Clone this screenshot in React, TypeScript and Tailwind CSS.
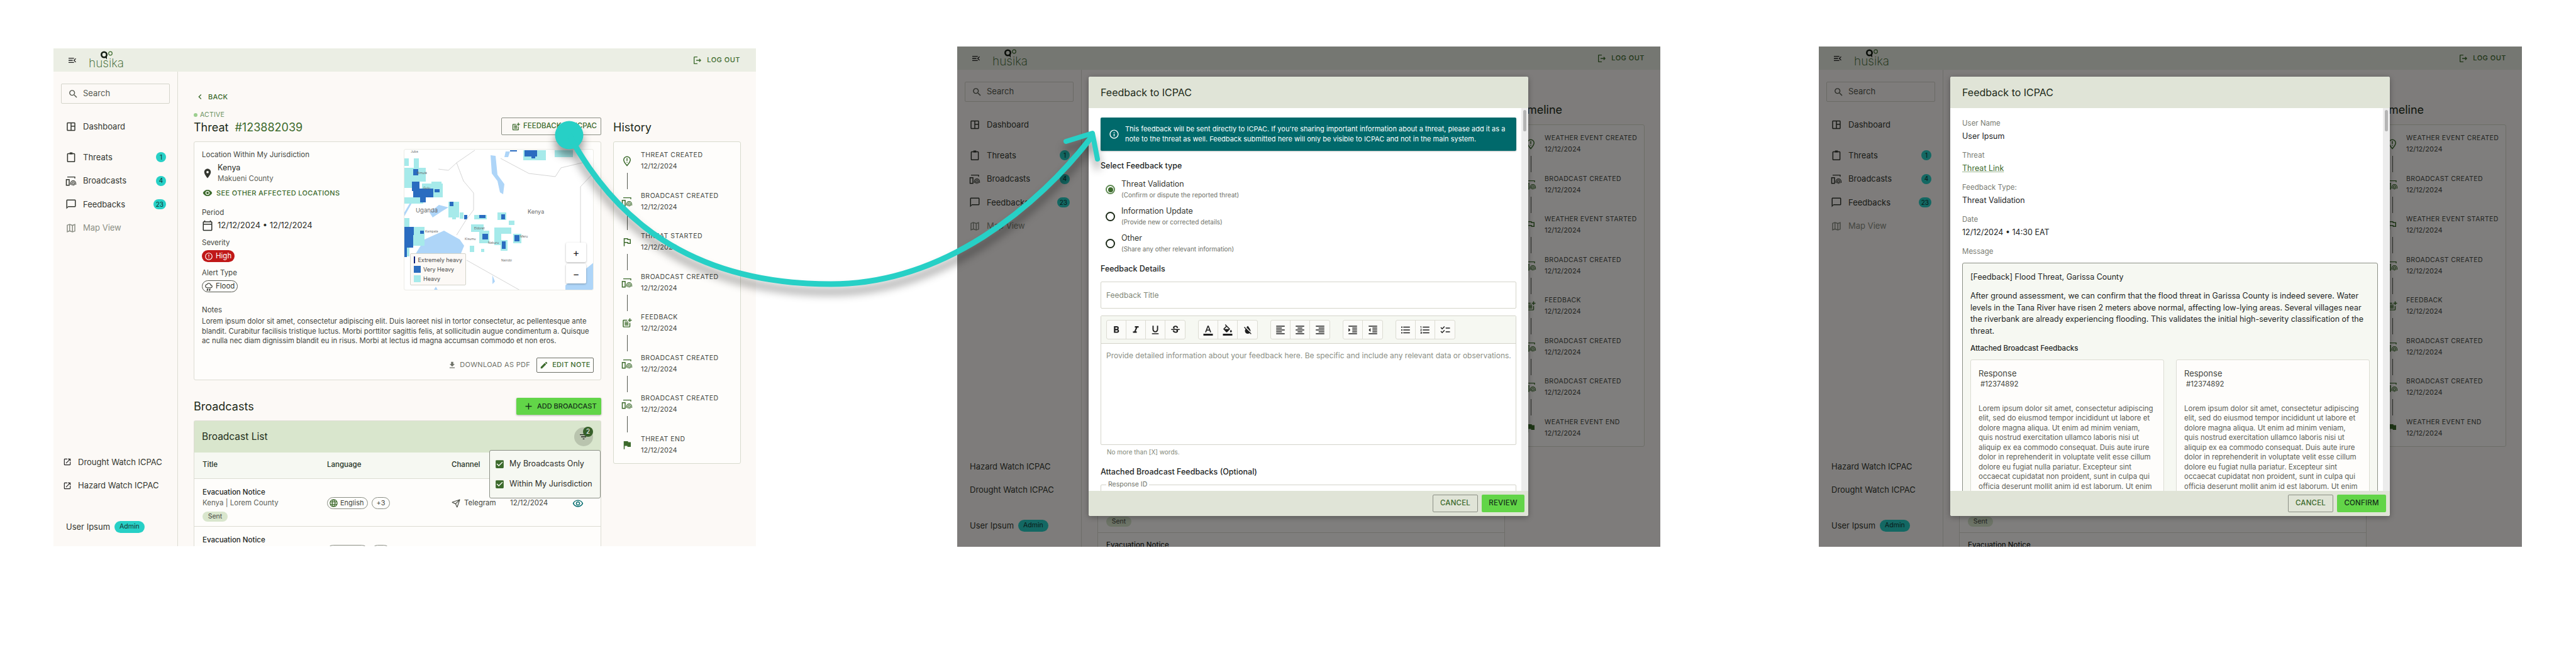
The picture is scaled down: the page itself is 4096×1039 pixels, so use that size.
import type { ReactNode } from "react";
import { Send } from "lucide-react";
import {
  MdAdd, MdCheckBox, MdChecklist, MdChevronLeft, MdChatBubbleOutline, MdEdit, MdErrorOutline, MdFileDownload,
  MdFilterList, MdFlag, MdFormatAlignCenter, MdFormatAlignLeft, MdFormatAlignRight, MdFormatBold, MdFormatColorFill,
  MdFormatColorReset, MdFormatColorText, MdFormatIndentDecrease, MdFormatIndentIncrease, MdFormatItalic,
  MdFormatListBulleted, MdFormatListNumbered, MdFormatUnderlined, MdInfoOutline, MdLanguage, MdLocationOn, MdMenuOpen,
  MdOutlineCalendarToday, MdOutlineFlag, MdOutlineLogout, MdOutlineMap, MdOutlineOpenInNew, MdOutlinePostAdd,
  MdOutlineRemoveRedEye, MdOutlineSpaceDashboard, MdOutlineThunderstorm, MdSearch, MdStrikethroughS, MdVisibility,
} from "react-icons/md";

const lorem =
  "Lorem ipsum dolor sit amet, consectetur adipiscing elit, sed do eiusmod tempor incididunt ut labore et dolore magna aliqua. Ut enim ad minim veniam, quis nostrud exercitation ullamco laboris nisi ut aliquip ex ea commodo consequat. Duis aute irure dolor in reprehenderit in voluptate velit esse cillum dolore eu fugiat nulla pariatur. Excepteur sint occaecat cupidatat non proident, sunt in culpa qui officia deserunt mollit anim id est laborum.  Ut enim ad minim veniam, quis nostrud exercitation";

function ClipboardIcon({ size = 18 }: { size?: number }) {
  return (
    <svg width={size} height={size} viewBox="0 0 24 24" fill="none" stroke="currentColor" strokeWidth="2">
      <rect x="4.5" y="4.5" width="15" height="17" rx="1" />
      <rect x="9" y="2" width="6" height="4" fill="currentColor" stroke="none" />
    </svg>
  );
}

function BroadcastIcon({ size = 18 }: { size?: number }) {
  return (
    <svg width={size} height={size} viewBox="0 0 24 24" fill="none" stroke="currentColor" strokeWidth="1.6">
      <path d="M4 3.5h16v3" strokeWidth="1.8" />
      <rect x="2" y="9" width="6" height="12" strokeWidth="2" />
      <path d="M11 20v-3a5.5 5.5 0 0 1 11 0v3" />
      <path d="M13.8 21v-4a2.7 2.7 0 0 1 5.4 0v4" />
      <path d="M16.5 22v-5" />
    </svg>
  );
}

function PinAlertIcon({ size = 18 }: { size?: number }) {
  return (
    <svg width={size} height={size} viewBox="0 0 24 24" fill="none" stroke="currentColor" strokeWidth="2">
      <path d="M12 22c-3.5-4-7-8-7-12a7 7 0 0 1 14 0c0 4-3.500 8-7 12z" />
      <path d="M12 6v6M12 14v1.500" />
    </svg>
  );
}

function LogoMark() {
  return (
    <div className="flex flex-col items-center w-[51px] h-[32px] relative">
      <svg width="32" height="18" viewBox="0 0 32 18" className="absolute top-0 left-[17px]">
        <circle cx="7.500" cy="7" r="4.200" fill="none" stroke="#141c12" strokeWidth="2.600" />
        <path d="M9 11l3 3.500v-6z" fill="#141c12" />
        <circle cx="17.500" cy="5" r="2.800" fill="none" stroke="#3c6a2c" strokeWidth="1.200" />
      </svg>
      <span className="absolute bottom-[1px] left-0 text-[19px] leading-[20px] font-extralight text-[#2f5c22]">husika</span>
    </div>
  );
}

function TopBar() {
  return (
    <div className="h-[37px] shrink-0 flex items-center justify-between bg-[#ebeee4] pl-[22px] pr-[25px]">
      <div className="flex items-center gap-[18px] text-[#222]">
        <MdMenuOpen size={16} />
        <LogoMark />
      </div>
      <div className="flex items-center gap-[7px] text-[#3c6a2c]">
        <MdOutlineLogout size={16} />
        <span className="text-[11px] font-medium tracking-[0.5px]">LOG OUT</span>
      </div>
    </div>
  );
}

function NavItem({ icon, label, badge, muted }: { icon: ReactNode; label: string; badge?: string; muted?: boolean }) {
  return (
    <div className={`h-[37.5px] flex items-center pl-[19px] pr-[18px] ${muted ? "text-[#8b8f85]" : "text-[#33362f]"}`}>
      <span className="w-[18px] flex justify-center">{icon}</span>
      <span className="ml-[10px] text-[13px] flex-1">{label}</span>
      {badge && (
        <span className="min-w-[16px] h-[16px] px-[4px] rounded-full bg-[#27d0c6] text-[#12312f] text-[10px] flex items-center justify-center">
          {badge}
        </span>
      )}
    </div>
  );
}

function Sidebar({ externalFirst, icons }: { externalFirst: string; icons: boolean }) {
  const second = externalFirst === "Drought" ? "Hazard" : "Drought";
  return (
    <aside className="w-[198px] shrink-0 border-r border-[#dcdcd3] flex flex-col">
      <div className="mt-[19px] mx-[12px] h-[32px] border border-[#d4d4ca] rounded-[2px] flex items-center pl-[10px] gap-[7px] text-[#55584f]">
        <MdSearch size={17} />
        <span className="text-[13px]">Search</span>
      </div>
      <div className="mt-[18px]">
        <NavItem icon={<MdOutlineSpaceDashboard size={19} />} label="Dashboard" />
      </div>
      <div className="mt-[11px]">
        <NavItem icon={<ClipboardIcon />} label="Threats" badge="1" />
        <NavItem icon={<BroadcastIcon />} label="Broadcasts" badge="4" />
        <NavItem icon={<MdChatBubbleOutline size={18} />} label="Feedbacks" badge="23" />
        <NavItem icon={<MdOutlineMap size={18} />} label="Map View" muted />
      </div>
      <div className="flex-1" />
      <div className="flex flex-col">
        {[externalFirst, second].map((name) => (
          <div key={name} className="h-[37.5px] flex items-center gap-[8px] pl-[15px] text-[13px] text-[#33362f]">
            {icons ? <MdOutlineOpenInNew size={14} className="text-[#222]" /> : <span className="w-[5px] -mr-[8px]" />}
            <span className={icons ? "ml-[2px]" : ""}>{name} Watch ICPAC</span>
          </div>
        ))}
      </div>
      <div className={`ml-[20px] flex items-center gap-[7px] ${icons ? "mt-[37px] mb-[21px]" : "mt-[28px] mb-[24px]"}`}>
        <span className="text-[13px] text-[#33362f]">User Ipsum</span>
        <span className="h-[19px] px-[8px] rounded-full bg-[#27d0c6] text-[10.500px] text-[#12312f] flex items-center">Admin</span>
      </div>
    </aside>
  );
}

const heavyCells = [
  [0, 14, 7, 12], [15, 14, 8, 15], [0, 29, 34, 22], [28, 54, 33, 22], [43, 51, 16, 4], [0, 51, 24, 10], [0, 76, 30, 10],
  [70, 83, 17, 25], [76, 108, 6, 3], [0, 109, 8, 14], [0, 123, 32, 30], [0, 153, 8, 17], [111, 104, 20, 7], [148, 100, 14, 12],
  [106, 119, 20, 12], [119, 129, 16, 20], [143, 124, 27, 10], [143, 134, 11, 18], [153, 144, 11, 17], [166, 113, 9, 7],
  [173, 134, 13, 15], [104, 153, 7, 10], [122, 158, 5, 5], [189, 1, 36, 16], [239, 1, 29, 11], [88, 100, 6, 10],
];
const veryHeavyCells = [
  [14, 31, 8, 10], [12, 51, 12, 15], [14, 62, 32, 14], [25, 76, 9, 8], [48, 63, 8, 5], [72, 83, 6, 7], [95, 104, 5, 7],
  [119, 104, 10, 5], [154, 103, 6, 8], [0, 123, 15, 13], [0, 136, 14, 20], [0, 156, 4, 15], [25, 129, 6, 5], [124, 134, 9, 9],
  [155, 146, 6, 12], [175, 136, 8, 10], [191, 1, 20, 10], [202, 8, 6, 6], [168, 1, 11, 2],
];
const mapLabels: [string, number, number, number][] = [
  ["Juba", 10, 5, 5], ["Bimulé", 20, 39, 5], ["Gulu", 30, 63, 5], ["Uganda", 18, 100, 9.5], ["Kenya", 196, 102, 9],
  ["Kampala", 33, 132, 5], ["Kisumu", 96, 144, 5], ["Nakuru", 133, 150, 5], ["Nairobi", 154, 178, 5], ["Meru", 184, 140, 5], ["Eldoret", 111, 127, 5],
];

function ThreatMap() {
  return (
    <div className="relative w-[302px] h-[225px] border border-[#ecece6] rounded-[3px] overflow-hidden bg-white">
      <svg width="302" height="225" viewBox="0 0 302 225">
        <path d="M19 164L32 143L63 129L88 143L95 153L88 170L15 170z" fill="#aed5f8" />
        <path d="M137 9L145 10L148 40L159 55L157 71L152 68L148 50L139 38z" fill="#aed5f8" />
        <path d="M302 179L256 216V225H302z" fill="#aed5f8" />
        <path d="M40 100L55 88L70 92L60 98L45 108z M0 100L10 83L12 85L0 106z M161 3h7l-3 9h-6z M140 200l4 10-4 4z M50 218l4 7h-8z" fill="#aed5f8" />
        {heavyCells.map(([x, y, w, h], i) => <rect key={`h${i}`} x={x} y={y} width={w} height={h} fill="#a6eaea" />)}
        {veryHeavyCells.map(([x, y, w, h], i) => <rect key={`v${i}`} x={x} y={y} width={w} height={h} fill="#2a6cc0" />)}
        <path
          d="M112 1L83 21L94 50L110 69L110 96L98 112L83 136M54 31L70 33L83 21M99 176L184 224M153 14L198 38L240 43L249 29L291 19L302 36L280 59V149"
          fill="none"
          stroke="#c9c9c9"
          strokeWidth="0.8"
        />
        {mapLabels.map(([t, x, y, s]) => (
          <text key={t} x={x} y={y} fontSize={s} fill="#6b6b6b" fontFamily="Inter, sans-serif">{t}</text>
        ))}
      </svg>
      <div className="absolute left-[9px] top-[165px] w-[89px] h-[51px] bg-[#fcf9f6] border border-[#d4d4ca] rounded-[2px] flex flex-col justify-around px-[5px] py-[2px]">
        {[["#0a1f7a", "Extremely heavy"], ["#2d6ebf", "Very Heavy"], ["#a6eaea", "Heavy"]].map(([c, t]) => (
          <div key={t} className="flex items-center gap-[4px]">
            <span className="w-[11px] h-[11px]" style={{ backgroundColor: c }} />
            <span className="text-[9px] leading-[11px] text-[#4a4a4a] whitespace-nowrap">{t}</span>
          </div>
        ))}
      </div>
      <div className="absolute left-[257px] top-[148px] flex flex-col gap-[3px]">
        {["+", "−"].map((s) => (
          <span key={s} className="w-[32px] h-[31px] bg-white rounded-[2px] shadow-[0_1px_3px_rgba(0,0,0,0.3)] flex items-center justify-center text-[16px] text-[#222]">{s}</span>
        ))}
      </div>
    </div>
  );
}

function DetailsCard() {
  return (
    <div className="border border-[#dcdcd3] rounded-[3px] bg-[#fefdfb] pt-[11px] pb-[11px] pl-[12px] pr-[11px]">
      <div className="flex justify-between">
        <div>
          <p className="mt-[2px] text-[11.500px] leading-[14px] text-[#44473f]">Location Within My Jurisdiction</p>
          <div className="mt-[6px] flex items-center">
            <MdLocationOn size={18} className="text-[#33362f]" />
            <div className="ml-[7px]">
              <p className="text-[12.500px] leading-[16px] text-[#2b2d28]">Kenya</p>
              <p className="mt-[1px] text-[11.500px] leading-[16px] text-[#5d6057]">Makueni County</p>
            </div>
          </div>
          <div className="mt-[7px] flex items-center gap-[6px] text-[#3c6a2c]">
            <MdVisibility size={16} className="ml-[1px]" />
            <span className="text-[11px] leading-[14px] tracking-[0.35px] font-medium">SEE OTHER AFFECTED LOCATIONS</span>
          </div>
          <p className="mt-[16px] text-[11.500px] leading-[14px] text-[#44473f]">Period</p>
          <div className="mt-[4px] h-[20px] flex items-center text-[#2b2d28]">
            <MdOutlineCalendarToday size={18} />
            <span className="ml-[7px] text-[13px]">12/12/2024 • 12/12/2024</span>
          </div>
          <p className="mt-[10px] text-[11.500px] leading-[14px] text-[#44473f]">Severity</p>
          <div className="mt-[5px] w-[52px] h-[19px] rounded-full bg-[#c01818] text-white flex items-center pl-[4px] gap-[4px]">
            <MdErrorOutline size={14} />
            <span className="text-[11.500px]">High</span>
          </div>
          <p className="mt-[10px] text-[11.500px] leading-[14px] text-[#44473f]">Alert Type</p>
          <div className="mt-[5px] w-[57px] h-[19px] rounded-full border border-[#55584f] text-[#33362f] flex items-center pl-[3px] gap-[4px]">
            <MdOutlineThunderstorm size={14} />
            <span className="text-[11.500px]">Flood</span>
          </div>
        </div>
        <ThreatMap />
      </div>
      <p className="mt-[21px] text-[11.500px] leading-[14px] text-[#44473f]">Notes</p>
      <p className="mt-[4px] text-[11.300px] leading-[15.500px] text-[#44473f]">
        Lorem ipsum dolor sit amet, consectetur adipiscing elit. Duis laoreet nisl in tortor consectetur, ac pellentesque ante blandit. Curabitur facilisis tristique luctus. Morbi porttitor sagittis felis, at sollicitudin augue condimentum a. Quisque ac nulla nec diam dignissim blandit eu in risus. Morbi at lectus id magna accumsan commodo et non eros.
      </p>
      <div className="mt-[18px] flex justify-end items-center gap-[10px]">
        <div className="flex items-center gap-[5px] text-[#6e7168]">
          <MdFileDownload size={14} />
          <span className="text-[11px] tracking-[0.3px]">DOWNLOAD AS PDF</span>
        </div>
        <div className="w-[91px] h-[24px] border border-[#6e7168] rounded-[2px] flex items-center justify-center gap-[6px] text-[#3c6a2c]">
          <MdEdit size={14} />
          <span className="text-[11px] tracking-[0.3px] font-medium">EDIT NOTE</span>
        </div>
      </div>
    </div>
  );
}

function BroadcastRow({ rowClass, titleClass }: { rowClass: string; titleClass: string }) {
  return (
    <div className={`grid grid-cols-[198px_198px_93px_99px_1fr] pl-[13px] border-b border-[#dcdcd3] ${rowClass}`}>
      <div className={titleClass}>
        <p className="text-[11.500px] leading-[14px] font-medium text-[#22251f]">Evacuation Notice</p>
        <p className="mt-[2px] text-[11.500px] leading-[16px] text-[#5d6057]">Kenya | Lorem County</p>
        <span className="mt-[6px] w-[40px] h-[16px] rounded-full bg-[#d9e6cd] text-[10.500px] text-[#44473f] flex items-center justify-center">Sent</span>
      </div>
      <div className="flex items-center gap-[6px] pt-[3px]">
        <span className="w-[65px] h-[19px] rounded-full border border-[#8b8f85] flex items-center pl-[2px] gap-[3px] text-[11px] text-[#44473f]">
          <MdLanguage size={15} className="text-[#3c6a2c]" />
          English
        </span>
        <span className="w-[29px] h-[19px] rounded-full border border-[#8b8f85] flex items-center justify-center text-[11px] text-[#44473f]">+3</span>
      </div>
      <div className="flex items-center gap-[6px] pt-[3px] text-[#44473f]">
        <Send size={14} />
        <span className="text-[11.500px]">Telegram</span>
      </div>
      <div className="flex items-center pt-[3px] text-[11.500px] text-[#44473f]">12/12/2024</div>
      <div className="flex items-center pt-[3px] text-[#006a6c]">
        <MdOutlineRemoveRedEye size={18} />
      </div>
    </div>
  );
}

function ColumnHeader() {
  return (
    <div className="h-[42px] grid grid-cols-[198px_198px_93px_99px_1fr] items-center pl-[13px] bg-[#f6f8f2] border-b border-[#dcdcd3] text-[11.500px] font-medium text-[#22301d]">
      <span>Title</span>
      <span>Language</span>
      <span>Channel</span>
      <span>Date</span>
    </div>
  );
}

function BroadcastTable() {
  return (
    <div className="relative mt-[9px] border-x border-t border-[#dcdcd3] rounded-t-[3px] bg-[#fefdfb]">
      <div className="h-[50px] bg-[#d9e6cd] flex items-center justify-between pl-[12px] pr-[12px]">
        <span className="text-[15.500px] text-[#1f2e1a]">Broadcast List</span>
        <span className="relative w-[30px] h-[30px] rounded-full bg-[#b9c4ae] flex items-center justify-center text-[#22251f]">
          <MdFilterList size={16} />
          <span className="absolute -top-[1px] right-0 w-[16px] h-[16px] rounded-full bg-[#37602a] text-white text-[10px] flex items-center justify-center">2</span>
        </span>
      </div>
      <ColumnHeader />
      <BroadcastRow rowClass="h-[76px]" titleClass="pt-[14px]" />
      <BroadcastRow rowClass="h-[76px]" titleClass="pt-[14px]" />
      <div className="absolute right-0 top-[46px] w-[177px] h-[77px] bg-[#f6f8f2] border border-[#8b8f85] rounded-[3px] flex flex-col justify-center gap-[14px] pl-[8px]">
        {["My Broadcasts Only", "Within My Jurisdiction"].map((t) => (
          <div key={t} className="flex items-center gap-[7px] h-[18px]">
            <MdCheckBox size={17} className="text-[#3c6a2c] -ml-[1px]" />
            <span className="text-[12.500px] text-[#2b2d28] whitespace-nowrap">{t}</span>
          </div>
        ))}
      </div>
    </div>
  );
}

const historyItems: [ReactNode, string][] = [
  [<PinAlertIcon size={18} />, "CREATED"],
  [<BroadcastIcon size={18} />, "BROADCAST CREATED"],
  [<MdOutlineFlag size={18} />, "STARTED"],
  [<BroadcastIcon size={18} />, "BROADCAST CREATED"],
  [<MdOutlinePostAdd size={18} />, "FEEDBACK"],
  [<BroadcastIcon size={18} />, "BROADCAST CREATED"],
  [<BroadcastIcon size={18} />, "BROADCAST CREATED"],
  [<MdFlag size={18} />, "END"],
];

function Timeline({ prefix, tracking }: { prefix: string; tracking: string }) {
  return (
    <div className="h-[513px] border border-[#d8dbcd] rounded-[3px] bg-[#fefdfb] pt-[13px] pl-[12px]">
      {historyItems.map(([icon, label], i) => {
        const text = label.length > 7 || label === "FEEDBACK" ? label : `${prefix} ${label}`;
        return (
          <div key={i} className="flex h-[64.500px]">
            <div className="w-[18px] flex flex-col items-center text-[#3c6a2c]">
              <div className="h-[34px] flex items-center">{icon}</div>
              {i < historyItems.length - 1 && <span className="mt-[2px] w-px h-[26px] bg-[#55584f]" />}
            </div>
            <div className="ml-[13px] text-[#44473f]">
              <p className={`text-[10.500px] leading-[16px] whitespace-nowrap ${tracking}`}>{text}</p>
              <p className="mt-[1px] text-[11px] leading-[16px]">12/12/2024</p>
            </div>
          </div>
        );
      })}
    </div>
  );
}

function ThreatPage() {
  return (
    <main className="flex-1 flex gap-[19px] pl-[25px] pr-[24px] overflow-hidden">
      <div className="w-[648px] shrink-0">
        <div className="mt-[32px] h-[16px] flex items-center text-[#3c6a2c]">
          <MdChevronLeft size={16} className="ml-[2px]" />
          <span className="ml-[5px] text-[11px] font-medium tracking-[0.3px]">BACK</span>
        </div>
        <div className="mt-[14px] flex justify-between items-end">
          <div>
            <div className="h-[14px] flex items-center gap-[4px]">
              <span className="w-[6px] h-[6px] rounded-full bg-[#9ccf8f]" />
              <span className="text-[10.500px] tracking-[0.2px] text-[#6b9160]">ACTIVE</span>
            </div>
            <h1 className="h-[25px] text-[18px] leading-[25px] text-[#1c2a18]">
              Threat <span className="ml-[5px] text-[#3c6a2c]">#123882039</span>
            </h1>
          </div>
          <div className="w-[159px] h-[28px] border border-[#8b8f85] rounded-[2px] flex items-center pl-[15px] gap-[4px] text-[#3c6a2c]">
            <MdOutlinePostAdd size={15} />
            <span className="text-[11.500px] font-medium whitespace-nowrap">FEEDBACK TO ICPAC</span>
          </div>
        </div>
        <div className="mt-[10px]">
          <DetailsCard />
        </div>
        <div className="mt-[28px] h-[27px] flex items-center justify-between">
          <h2 className="text-[18px] text-[#1c2a18]">Broadcasts</h2>
          <div className="w-[135px] h-[27px] rounded-[2px] bg-[#62d548] shadow-[0_1px_3px_rgba(0,0,0,0.3)] flex items-center pl-[11px] gap-[5px] text-[#15301a]">
            <MdAdd size={17} />
            <span className="text-[11px] font-medium whitespace-nowrap">ADD BROADCAST</span>
          </div>
        </div>
        <BroadcastTable />
      </div>
      <div className="w-[203px] shrink-0">
        <h2 className="mt-[77px] h-[24px] text-[18px] leading-[24px] text-[#1c2a18]">History</h2>
        <div className="mt-[10px]">
          <Timeline prefix="THREAT" tracking="tracking-[0.5px]" />
        </div>
      </div>
    </main>
  );
}

function DimmedPage() {
  return (
    <main className="flex-1 flex gap-[19px] pl-[25px] pr-[24px] overflow-hidden">
      <div className="w-[648px] shrink-0 pt-[568px]">
        <div className="border-x border-t border-[#dcdcd3] bg-[#fefdfb]">
          <div className="h-[48px] bg-[#d9e6cd]" />
          <ColumnHeader />
          <BroadcastRow rowClass="h-[78px]" titleClass="pt-[14px]" />
          <BroadcastRow rowClass="h-[76px]" titleClass="pt-[12px]" />
        </div>
      </div>
      <div className="w-[203px] shrink-0">
        <h2 className="mt-[52px] h-[24px] text-[18px] leading-[24px] text-[#1c2a18]">Timeline</h2>
        <div className="mt-[11px]">
          <Timeline prefix="WEATHER EVENT" tracking="tracking-[0.4px]" />
        </div>
      </div>
    </main>
  );
}

function Modal({ action, actionTextClass, children }: { action: string; actionTextClass: string; children: ReactNode }) {
  return (
    <div className="absolute left-[209px] top-[48px] w-[699px] h-[699px] rounded-[3px] overflow-hidden flex flex-col bg-white shadow-[0_2px_10px_rgba(0,0,0,0.3)]">
      <div className="h-[50px] shrink-0 bg-[#e0e4d7] flex items-center pl-[19px] text-[16px] text-[#1c2a18]">Feedback to ICPAC</div>
      <div className="flex-1 flex min-h-0">
        <div className="flex-1 min-w-0 overflow-hidden pl-[19px] pr-[8px]">{children}</div>
        <div className="w-[11px] shrink-0 bg-[#ececec] pt-[3px] pl-[3px]">
          <div className="w-[5px] h-[34px] rounded-full bg-[#b5b5b5]" />
        </div>
      </div>
      <div className="h-[40px] shrink-0 bg-[#e0e4d7] flex items-center justify-end gap-[6px] pr-[6px]">
        <span className="w-[72px] h-[28px] border border-[#8b8f85] rounded-[2px] flex items-center justify-center text-[11.500px] font-medium tracking-[0.2px] text-[#3c6a2c]">CANCEL</span>
        <span className={`h-[28px] rounded-[2px] bg-[#62d548] flex items-center justify-center text-[11.500px] font-medium tracking-[0.2px] text-[#15301a] ${actionTextClass}`}>{action}</span>
      </div>
    </div>
  );
}

const toolbarGroups = [
  [<MdFormatBold />, <MdFormatItalic />, <MdFormatUnderlined />, <MdStrikethroughS />],
  [<MdFormatColorText />, <MdFormatColorFill />, <MdFormatColorReset />],
  [<MdFormatAlignLeft />, <MdFormatAlignCenter />, <MdFormatAlignRight />],
  [<MdFormatIndentIncrease />, <MdFormatIndentDecrease />],
  [<MdFormatListBulleted />, <MdFormatListNumbered />, <MdChecklist />],
];

const feedbackTypes = [
  ["Threat Validation", "(Confirm or dispute the reported threat)"],
  ["Information Update", "(Provide new or corrected details)"],
  ["Other", "(Share any other relevant information)"],
];

function FeedbackForm() {
  return (
    <div>
      <div className="mt-[15px] h-[53px] rounded-[2px] bg-[#00696b] text-white flex items-center pl-[13px] pr-[10px] gap-[9px] shadow-[0_1px_2px_rgba(0,0,0,0.25)]">
        <MdInfoOutline size={17} className="shrink-0" />
        <p className="text-[11px] leading-[15.500px]">
          This feedback will be sent directly to ICPAC. If you're sharing important information about a threat, please add it as a note to the threat as well. Feedback submitted here will only be visible to ICPAC and not in the main system.
        </p>
      </div>
      <p className="mt-[16px] text-[12.500px] leading-[16px] font-medium text-[#22251f]">Select Feedback type</p>
      <div className="mt-[12px] flex flex-col">
        {feedbackTypes.map(([title, sub], i) => (
          <div key={title} className="h-[43px] flex items-start">
            <span className={`mt-[10px] ml-[8px] w-[15px] h-[15px] rounded-full border-2 flex items-center justify-center ${i === 0 ? "border-[#5f8a52]" : "border-[#1c2a18]"}`}>
              {i === 0 && <span className="w-[8px] h-[8px] rounded-full bg-[#3c6a2c]" />}
            </span>
            <div className="ml-[10px]">
              <p className="text-[12.500px] leading-[18px] text-[#33362f]">{title}</p>
              <p className="mt-[1px] text-[10px] leading-[14px] text-[#6e7168]">{sub}</p>
            </div>
          </div>
        ))}
      </div>
      <p className="mt-[7px] text-[12.500px] leading-[16px] font-medium text-[#22251f]">Feedback Details</p>
      <div className="mt-[12px] h-[43px] border border-[#d4d4ca] rounded-[2px] flex items-center pl-[8px] text-[12px] text-[#7f8777]">Feedback Title</div>
      <div className="mt-[11px] h-[206px] border border-[#d4d4ca] rounded-[2px]">
        <div className="h-[44px] bg-[#f6f8f2] border-b border-[#d4d4ca] flex items-center pl-[8px] gap-[20px]">
          {toolbarGroups.map((group, g) => (
            <div key={g} className="h-[31px] flex border border-[#dcdcd3] rounded-[3px] bg-[#fbfbf8] divide-x divide-[#dcdcd3]">
              {group.map((icon, b) => (
                <span key={b} className="w-[31px] flex items-center justify-center text-[18px] text-[#1f1f1f]">{icon}</span>
              ))}
            </div>
          ))}
        </div>
        <p className="mt-[11px] pl-[8px] text-[12px] leading-[16px] whitespace-nowrap text-[#8b8f85]">
          Provide detailed information about your feedback here. Be specific and include any relevant data or observations.
        </p>
      </div>
      <p className="mt-[5px] pl-[10px] text-[10px] leading-[12px] text-[#7f8777]">No more than [X] words.</p>
      <p className="mt-[18px] text-[12.500px] leading-[16px] font-medium text-[#22251f]">Attached Broadcast Feedbacks (Optional)</p>
      <div className="relative mt-[12px] h-[40px] border border-[#d4d4ca] rounded-[2px]">
        <span className="absolute -top-[7px] left-[8px] px-[3px] bg-white text-[10.500px] leading-[12px] text-[#6e7168]">Response ID</span>
      </div>
    </div>
  );
}

function ReviewField({ label, value, link }: { label: string; value: string; link?: boolean }) {
  return (
    <div className="mb-[14px]">
      <p className="text-[11.500px] leading-[14px] text-[#7a7d74]">{label}</p>
      <p className={`mt-[5px] text-[12.500px] leading-[18px] ${link ? "text-[#3c6a2c] underline decoration-[#9fba94]" : "text-[#22251f]"}`}>{value}</p>
    </div>
  );
}

function ResponseCard() {
  return (
    <div className="border border-[#dcdcd3] rounded-[3px] bg-[#fefdfb] pt-[12px] px-[12px] h-[260px] overflow-hidden">
      <p className="text-[13px] leading-[18px] text-[#44473f]">Response</p>
      <p className="pl-[3px] text-[11.500px] leading-[16px] text-[#44473f]">#12374892</p>
      <p className="mt-[24px] text-[11.500px] leading-[15.500px] text-[#5d6057]">{lorem}</p>
    </div>
  );
}

function FeedbackReview() {
  return (
    <div className="pt-[17px]">
      <ReviewField label="User Name" value="User Ipsum" />
      <ReviewField label="Threat" value="Threat Link" link />
      <ReviewField label="Feedback Type:" value="Threat Validation" />
      <ReviewField label="Date" value="12/12/2024 • 14:30 EAT" />
      <p className="text-[11.500px] leading-[14px] text-[#7a7d74]">Message</p>
      <div className="mt-[11px] border border-[#8b8f85] rounded-[3px] bg-[#f6f8f2] pt-[13px] px-[12px] h-[420px] text-[#22251f]">
        <p className="text-[12.500px] leading-[18px]">[Feedback] Flood Threat, Garissa County</p>
        <p className="mt-[12px] text-[12.500px] leading-[18.700px]">
          After ground assessment, we can confirm that the flood threat in Garissa County is indeed severe. Water levels in the Tana River have risen 2 meters above normal, affecting low-lying areas. Several villages near the riverbank are already experiencing flooding. This validates the initial high-severity classification of the threat.
        </p>
        <p className="mt-[10px] text-[11.500px] leading-[14px] font-medium">Attached Broadcast Feedbacks</p>
        <div className="mt-[11px] grid grid-cols-2 gap-[19px]">
          <ResponseCard />
          <ResponseCard />
        </div>
      </div>
    </div>
  );
}

function DimmedScreen({ first, left, children, action, actionTextClass }: { first: string; left: string; children: ReactNode; action: string; actionTextClass: string }) {
  return (
    <div className={`relative w-[1118px] h-[796px] shrink-0 mt-[74px] flex flex-col bg-[#fcf9f6] overflow-hidden ${left}`}>
      <TopBar />
      <div className="flex-1 flex min-h-0">
        <Sidebar externalFirst={first} icons={false} />
        <DimmedPage />
      </div>
      <div className="absolute inset-0 bg-black/50" />
      <Modal action={action} actionTextClass={actionTextClass}>{children}</Modal>
    </div>
  );
}

function FlowArrow() {
  return (
    <svg width="4096" height="1039" viewBox="0 0 4096 1039" className="absolute inset-0 pointer-events-none drop-shadow-[0_12px_7px_rgba(0,0,0,0.4)]">
      <circle cx="905" cy="215" r="22.500" fill="#27d0c6" />
      <path d="M905 215C975 345 1095 452 1321 452C1500 452 1650 330 1738 215" fill="none" stroke="#27d0c6" strokeWidth="9" />
      <path d="M1695 225L1737 212L1745 253" fill="none" stroke="#27d0c6" strokeWidth="8" strokeLinecap="round" strokeLinejoin="round" />
    </svg>
  );
}

export default function App() {
  return (
    <div className="relative w-[4096px] h-[1039px] bg-white overflow-hidden flex items-start pl-[85px] font-[Inter,sans-serif]">
      <div className="w-[1117px] h-[792px] shrink-0 mt-[77px] flex flex-col bg-[#fcf9f6] overflow-hidden">
        <TopBar />
        <div className="flex-1 flex min-h-0">
          <Sidebar externalFirst="Drought" icons />
          <ThreatPage />
        </div>
      </div>
      <DimmedScreen first="Hazard" left="ml-[320px]" action="REVIEW" actionTextClass="w-[68px]">
        <FeedbackForm />
      </DimmedScreen>
      <DimmedScreen first="Hazard" left="ml-[252px]" action="CONFIRM" actionTextClass="w-[78px]">
        <FeedbackReview />
      </DimmedScreen>
      <FlowArrow />
    </div>
  );
}
